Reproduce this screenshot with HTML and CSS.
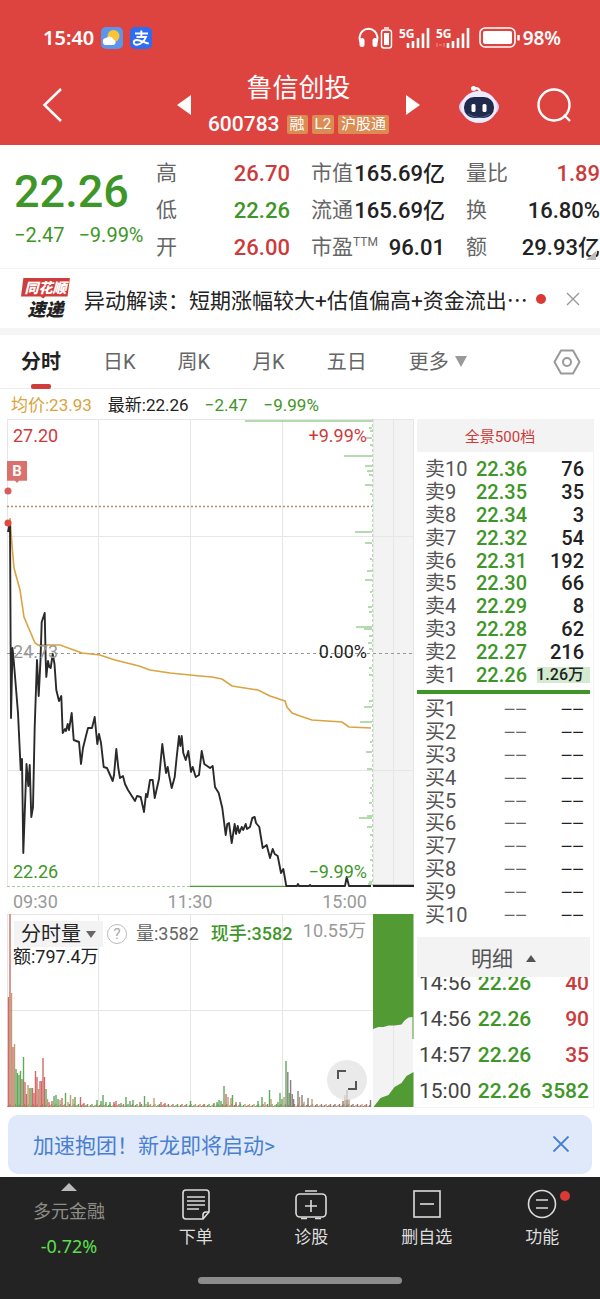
FILE: index.html
```html
<!DOCTYPE html>
<html lang="zh-CN">
<head>
<meta charset="utf-8">
<meta name="viewport" content="width=device-width, initial-scale=1">
<title>鲁信创投 600783</title>
<link rel="stylesheet" href="styles.css">
</head>
<body>
<header class="top">
  <div class="status">
    <span class="clock">15:40</span>
    <svg class="app-icon" viewBox="0 0 22 22"><rect width="22" height="22" rx="5" fill="#5b96ea"/><circle cx="12.500" cy="9" r="6" fill="#fbc335"/><path d="M5.500 18a3.500 3.500 0 0 1-.3-7 4 4 0 0 1 7 1.200 3 3 0 0 1 .3 5.800z" fill="#fff"/></svg>
    <svg class="app-icon" viewBox="0 0 22 22"><rect width="22" height="22" rx="5" fill="#2f6df0"/><path d="M5 6.500h13M11.300 3.500v6.500M6.500 10h9.500c-1.500 4-5.500 7.700-9 7.700-4.500 0-4-4.700-.2-4.700 3.500 0 7 2.300 12 3.700" fill="none" stroke="#fff" stroke-width="1.900"/></svg>
    <span class="push"></span>
    <svg class="radio-icons" viewBox="0 0 114 24" fill="none" stroke="#fff">
      <path d="M3.500 17.500A9 9 0 1 1 17.500 17.500" stroke-width="2"/>
      <path d="M4 14.500v4M17 14.500v4" stroke-width="5" stroke-linecap="round"/>
      <rect x="23.500" y="4" width="10" height="18" rx="2.500" stroke-width="1.400"/><path d="M26 2h5" stroke-width="1.500"/><rect x="26" y="7" width="5" height="12" fill="#fff" stroke="none"/>
      <path d="M50 22v-5M55 22v-7M60 22v-10M65 22V7.500M70 22V2" stroke-width="2.600"/>
      <path d="M90 22v-5M95 22v-7M100 22v-10M105 22V7.500M110 22V2" stroke-width="2.600"/>
      <path d="M79 17v4M81 19h3M86 17v4" stroke="#ef8f8b" stroke-width="1"/>
      <text x="41" y="12" class="net">5G</text><text x="78" y="12" class="net">5G</text>
    </svg>
    <svg class="battery" viewBox="0 0 42 22"><rect x="1" y="1" width="35" height="19" rx="5" fill="none" stroke="#fff" stroke-width="1.600"/><rect x="4" y="4" width="29" height="13" rx="2" fill="#fff"/><path d="M39.500 8v5.500" stroke="#fff" stroke-width="2.500"/></svg>
    <span class="percent">98%</span>
  </div>
  <div class="bar">
    <button class="icon-btn" aria-label="返回"><svg width="24" height="38" viewBox="0 0 24 38"><path d="M20 3 3.500 19 20 35" fill="none" stroke="#fff" stroke-width="2.500"/></svg></button>
    <div class="switcher">
      <button class="icon-btn" aria-label="上一只"><svg width="14" height="20" viewBox="0 0 14 20"><path d="M14 0v20L0 10z" fill="#fff"/></svg></button>
      <div class="stock">
        <h1>鲁信创投</h1>
        <div class="code-row"><span class="code">600783</span><span class="tag">融</span><span class="tag">L2</span><span class="tag">沪股通</span></div>
      </div>
      <button class="icon-btn" aria-label="下一只"><svg width="14" height="20" viewBox="0 0 14 20"><path d="M0 0v20l14-10z" fill="#fff"/></svg></button>
    </div>
    <div class="tools">
      <button class="icon-btn" aria-label="智能助手"><svg width="42" height="40" viewBox="0 0 42 40">
        <path d="M15 3.500q6-1.500 7.500 4" fill="none" stroke="#fff" stroke-width="2.200"/><circle cx="15.500" cy="3.500" r="2.500" fill="#fff"/>
        <ellipse cx="21" cy="22" rx="20" ry="12" fill="#d9cdf5"/><ellipse cx="21" cy="22" rx="18" ry="16" fill="#eeeaff"/>
        <rect x="6" y="12" width="30" height="21" rx="10" fill="#1f2a4d"/><path d="M10 29q11 7 22 0" stroke="#4c6196" fill="none"/>
        <rect x="13.500" y="19" width="4" height="8" rx="1.500" fill="#fff"/><rect x="24.500" y="19" width="4" height="8" rx="1.500" fill="#fff"/></svg></button>
      <button class="icon-btn" aria-label="搜索"><svg width="36" height="36" viewBox="0 0 36 36"><circle cx="18" cy="18" r="15.500" fill="none" stroke="#fff" stroke-width="2.400"/><path d="m28 28 6 6" stroke="#fff" stroke-width="2.400"/></svg></button>
    </div>
  </div>
</header>

<main>
  <section class="quote">
    <div class="last"><div class="price">22.26</div><div class="change"><span>−2.47</span><span>−9.99%</span></div></div>
    <dl class="facts">
      <div><dt>高</dt><dd class="up">26.70</dd></div><div><dt>市值</dt><dd>165.69亿</dd></div><div><dt>量比</dt><dd class="up">1.89</dd></div>
      <div><dt>低</dt><dd class="down">22.26</dd></div><div><dt>流通</dt><dd>165.69亿</dd></div><div><dt>换</dt><dd>16.80%</dd></div>
      <div><dt>开</dt><dd class="up">26.00</dd></div><div><dt>市盈<sup>TTM</sup></dt><dd>96.01</dd></div><div><dt>额</dt><dd>29.93亿</dd></div>
    </dl>
    <span class="corner"></span>
  </section>

  <section class="news">
    <div class="logo"><span class="logo-top">同花顺</span><span class="logo-bottom">速递</span></div>
    <a class="headline" href="#news">异动解读：短期涨幅较大+估值偏高+资金流出<span class="dots">…</span></a>
    <span class="dot"></span>
    <button class="icon-btn" aria-label="关闭"><svg width="16" height="16" viewBox="0 0 16 16"><path d="m2 2 12 12M14 2 2 14" stroke="#999" stroke-width="1.400"/></svg></button>
  </section>

  <nav class="tabs">
    <button class="tab active">分时</button><button class="tab">日K</button><button class="tab">周K</button><button class="tab">月K</button><button class="tab">五日</button><button class="tab">更多<i class="caret"></i></button>
    <button class="icon-btn" aria-label="设置"><svg width="28" height="28" viewBox="0 0 28 28" fill="none" stroke="#999" stroke-width="2"><path d="M8 2.500h12L26.500 14 20 25.500H8L1.500 14z" stroke-linejoin="round"/><circle cx="14" cy="14" r="4"/></svg></button>
  </nav>

  <div class="legend"><span class="avg">均价:23.93</span><span>最新:22.26</span><span class="down">−2.47</span><span class="down">−9.99%</span></div>

  <div class="board">
    <div class="charts">
      <div class="plot">
        <svg viewBox="0 419 414 468" preserveAspectRatio="none">
          <rect x="373" y="419" width="40" height="467" fill="#f3f3f3"/>
          <path class="grid" d="M7.500 419V886M98.500 419V886M190.500 419V886M282.500 419V886M373.500 419V886M393.500 419V886M413.500 419V886M7 419.500H414M7 536.500H414M7 770.500H414"/>
          <path d="M7 506.500H372" stroke="#b98a68" stroke-width="1.300" stroke-dasharray="2 2"/>
          <path d="M7 653.500H413" stroke="#999" stroke-dasharray="3 3"/>
          <path d="M7 886.500H190" stroke="#a9c8a3" stroke-dasharray="3 2"/><path d="M190 886.500H290" stroke="#4f9a35" stroke-width="1.400"/>
          <path d="M372.500 419V886" stroke="#b5dcae" stroke-dasharray="3 2"/>
          <path id="depth" stroke="#9bcf94" stroke-width="1.600"/>
          <polyline class="avg-line" points="10,518 12,545 14,568 20,590 24,617 35,643 38,645 60,645 82,653 100,655 115,660 139,666 150,670 170,673 200,676 212,677 222,679 232,686 258,690 270,696 282,700 285,701 287,707 292,713 300,716 312,720 342,722 349,727 371,728"/>
          <polyline class="price-line" points="8,532 10,522 11,718 12.500,648 14,664 18,713 20.700,770 22,759 23.300,853 26.500,764 28.300,786 29.700,765 31.300,817 33,807 34.700,727 37,660 38.700,696 40.500,660 41.700,622 44.700,613 45.700,660 46.300,677 48,661 49.300,667 50.700,668 52.700,654 54.500,664 56.300,690 59,701 61.300,696 62.700,733 65,729 66,731 67.700,724 69,730 71.700,713 73.700,740 79,742 81,764 83,748 85.700,737 88,728 92,728 94.700,717 97.300,744 99,734 101,743 103.700,767 107,768 112.700,781 114,775 116.300,749 118.300,768 120,778 123,776 125,784 128,790 135,801 137,796 140.700,797 144,812 146,794 147.300,797 150,780 152.700,780 154.700,798 159,779 162.300,744 166,773 167.700,767 169,775 171.700,788 174.700,777 176.700,757 179,736 180.300,746 181.700,736 183.300,753 185.700,760 188.300,751 191,772 192.700,767 195.700,777 199,775 201.700,751 204.300,764 210,768 212.700,766 215,787 218.700,793 222.300,808 225.700,835 227.300,824 229,823 231.700,843 234.700,824 236,834 237.700,826 239.300,833 241.700,827 243.300,830 245.700,824 247,829 250,827 252.300,818 254.700,817 256,823 259.300,827 262.700,848 266.700,845 270,858 272.700,849 274.700,854 277.700,856 281,873 283.300,869 286.300,886 297,886 298,884 299,886 309,886 310,885 311,886 345,886 346.700,877 349,886 371,886"/>
          <path d="M373 886H414" stroke="#222" stroke-width="2.500"/>
          <circle cx="8" cy="491" r="3.500" fill="#d65d5b"/><circle cx="8" cy="523" r="3.500" fill="#e04a43"/>
        </svg>
        <span class="badge">B</span>
        <div class="labels"><span class="up">27.20</span><span class="up">+9.99%</span></div>
        <div class="labels mid"><span class="muted">24.73</span><span>0.00%</span></div>
        <div class="labels low"><span class="down">22.26</span><span class="down">−9.99%</span></div>
      </div>
      <div class="axis"><span>09:30</span><span>11:30</span><span>15:00</span></div>
      <div class="volume">
        <svg viewBox="0 914 414 193" preserveAspectRatio="none">
          <rect x="373" y="914" width="40" height="193" fill="#f3f3f3"/>
          <path class="grid" d="M7.500 914V1107M98.500 914V1107M190.500 914V1107M282.500 914V1107M393.500 914V1107M7 914.500H373M7 1010.500H373"/>
          <path d="M373 914h40.500v125h-1v-22l-4 .5-4 3-3 4-7 1-6 0-5 1.500-5 0-5.500 2z" fill="#519a34"/>
          <path d="M373.500 1107l7-9 8-3 6-8 7-4 5-7 7-4V1107z" fill="#519a34"/>
          <g id="bars"></g>
        </svg>
        <div class="vol-head">
          <button class="picker">分时量<i class="caret"></i></button>
          <button class="help" aria-label="说明">?</button>
          <span class="vol">量:3582</span><span class="down now">现手:3582</span>
        </div>
        <div class="amount">额:797.4万</div>
        <span class="max">10.55万</span>
        <button class="expand" aria-label="全屏"><svg width="22" height="22" viewBox="0 0 22 22"><path d="M2 10V2h8M20 12v8h-8" fill="none" stroke="#555" stroke-width="2"/></svg></button>
      </div>
    </div>

    <aside class="book">
      <button class="levels">全景500档</button>
      <table class="orders">
        <tr><th>卖10</th><td class="down">22.36</td><td>76</td></tr>
        <tr><th>卖9</th><td class="down">22.35</td><td>35</td></tr>
        <tr><th>卖8</th><td class="down">22.34</td><td>3</td></tr>
        <tr><th>卖7</th><td class="down">22.32</td><td>54</td></tr>
        <tr><th>卖6</th><td class="down">22.31</td><td>192</td></tr>
        <tr><th>卖5</th><td class="down">22.30</td><td>66</td></tr>
        <tr><th>卖4</th><td class="down">22.29</td><td>8</td></tr>
        <tr><th>卖3</th><td class="down">22.28</td><td>62</td></tr>
        <tr><th>卖2</th><td class="down">22.27</td><td>216</td></tr>
        <tr><th>卖1</th><td class="down">22.26</td><td class="big">1.26万</td></tr>
      </table>
      <div class="ratio"></div>
      <table class="orders empty">
        <tr><th>买1</th><td>−−</td><td>−−</td></tr>
        <tr><th>买2</th><td>−−</td><td>−−</td></tr>
        <tr><th>买3</th><td>−−</td><td>−−</td></tr>
        <tr><th>买4</th><td>−−</td><td>−−</td></tr>
        <tr><th>买5</th><td>−−</td><td>−−</td></tr>
        <tr><th>买6</th><td>−−</td><td>−−</td></tr>
        <tr><th>买7</th><td>−−</td><td>−−</td></tr>
        <tr><th>买8</th><td>−−</td><td>−−</td></tr>
        <tr><th>买9</th><td>−−</td><td>−−</td></tr>
        <tr><th>买10</th><td>−−</td><td>−−</td></tr>
      </table>
      <button class="detail">明细<i class="caret upward"></i></button>
      <div class="trades">
        <table>
          <tr><td>14:56</td><td class="down">22.26</td><td class="up">40</td></tr>
          <tr><td>14:56</td><td class="down">22.26</td><td class="up">90</td></tr>
          <tr><td>14:57</td><td class="down">22.26</td><td class="up">35</td></tr>
          <tr><td>15:00</td><td class="down">22.26</td><td class="down">3582</td></tr>
        </table>
      </div>
    </aside>
  </div>

  <div class="promo">
    <a href="#promo">加速抱团！新龙即将启动&gt;</a>
    <button class="icon-btn" aria-label="关闭"><svg width="18" height="18" viewBox="0 0 18 18"><path d="m1.500 1.500 15 15M16.500 1.500l-15 15" stroke="#4a80cf" stroke-width="1.800"/></svg></button>
  </div>
</main>

<footer class="dock">
  <nav class="dock-items">
    <button class="sector"><svg width="16" height="8" viewBox="0 0 16 8"><path d="M8 0l8 8H0z" fill="#bbb"/></svg><span>多元金融</span><b>-0.72%</b></button>
    <button><svg width="30" height="32" viewBox="0 0 30 32"><path d="M5 2h20q3 0 3 3v19l-6 7H5q-3 0-3-3V5q0-3 3-3z"/><path d="M6 9h18M6 13h18M6 17h18M6 21h12M22 31v-4q0-3 3-3h3"/></svg><span>下单</span></button>
    <button><svg width="34" height="32" viewBox="0 0 34 32"><rect x="2" y="6" width="30" height="23" rx="4"/><path d="M11 3h12M17 12v12M11 18h12M7 30.500h6M21 30.500h6"/></svg><span>诊股</span></button>
    <button><svg width="30" height="32" viewBox="0 0 30 32"><rect x="2" y="3" width="26" height="26"/><path d="M8 16h14"/></svg><span>删自选</span></button>
    <button class="more"><svg width="30" height="32" viewBox="0 0 30 32"><circle cx="15" cy="16" r="13.500"/><path d="M9 12h12M9 20h12"/></svg><span>功能</span><i class="dot"></i></button>
  </nav>
  <div class="home"></div>
</footer>
<script src="chart.js"></script>
</body>
</html>
```

FILE: chart.js
```js
// Resting depth by price: [y, length] measured leftwards from the plot edge.
const depth = [[421,127],[428,3],[431,2],[438,6],[445,2],[456,28],[466,7],[471,5],[475,3],[485,7],[494,2],[532,17],[543,7],[559,2],[571,5],[580,7],[592,2],[607,4],[612,3],[627,16],[629,8],[636,3],[643,4],[649,3],[668,3],[675,3],[701,3],[707,8],[722,12],[742,2],[752,6],[769,5],[788,2],[793,2],[803,3],[816,5],[818,13],[827,5],[835,2],[847,2],[860,2],[882,3],[884,4]];
document.getElementById('depth').setAttribute('d', depth.map(([y, n]) => `M${372 - n} ${y}H372`).join(''));

// Traded volume: [x, height, side], r = up, g = down, o = flat, k = limit-locked.
const tones = { r: '#d16a66', g: '#62a85c', o: '#b9a071', k: '#85807f' };
const peaks = [[8.5,110,'r'],[10,193,'r'],[11.5,114,'o'],[13,60,'r'],[14.5,63,'o'],[16,38,'g'],[17.5,34,'g'],[19,32,'g'],[20.5,36,'g'],[22,28,'r'],[23.5,50,'g'],[25,25,'r'],[26.5,13,'r'],[28,22,'o'],[29.5,19,'o'],[31,19,'g'],[32.5,19,'r'],[34,14,'r'],[35.5,36,'r'],[37,30,'r'],[38.5,18,'o'],[40,26,'r'],[41.5,26,'r'],[43,49,'r'],[44.5,30,'r'],[46,18,'g'],[47.5,8,'o'],[49,5,'r'],[52,6,'r'],[54,11,'g'],[56,12,'g'],[58,8,'g'],[60,7,'o'],[62,9,'r'],[65.5,14,'g'],[68,5,'o'],[70.5,12,'o'],[73,8,'o'],[75,10,'g'],[80.5,10,'r'],[84,4,'r'],[97,7,'g'],[101,6,'g'],[103,12,'g'],[106,5,'g'],[110,5,'g'],[114,5,'r'],[116,6,'r'],[121,4,'g'],[126,10,'g'],[130,6,'g'],[133,7,'g'],[140,5,'r'],[144.5,11,'g'],[148,5,'g'],[154,9,'o'],[161,5,'r'],[165,4,'r'],[190.5,6,'g'],[204,3,'r'],[214,4,'g'],[217,5,'g'],[219,7,'g'],[221,6,'g'],[224,21,'g'],[226,13,'r'],[228,10,'o'],[231,9,'o'],[232.5,12,'g'],[236,5,'r'],[240,5,'g'],[258,6,'g'],[262,10,'g'],[265,5,'o'],[269.5,17,'g'],[271,8,'o'],[278,5,'g'],[280,14,'g'],[282,8,'g'],[284,10,'o'],[286,46,'g'],[287.8,35,'k'],[289.2,14,'g'],[290.6,27,'k'],[292.2,13,'k'],[293.6,8,'k'],[298,16,'k'],[299.5,10,'o'],[302,12,'k'],[304,5,'o'],[308,9,'k'],[312,8,'o'],[343,6,'k'],[345,12,'o'],[347,17,'k'],[349,8,'o'],[370.5,7,'k']];
const bars = [];
const order = 'rgorggokrog';
for (let i = 0; i < 242; i++) {
  const x = 8 + i * 1.5;
  bars.push([x, 1 + (i * 7) % 3, x > 286 ? 'okkr'[i % 4] : order[(i * 5) % order.length]]);
}
document.getElementById('bars').innerHTML = bars.concat(peaks)
  .map(([x, h, s]) => `<path d="M${x} 1107v-${h}" stroke="${tones[s]}" stroke-width="1.4"/>`).join('');
```

FILE: styles.css
```css
* { box-sizing: border-box; }
body {
  margin: 0;
  background: #fff;
  color: #222;
  font-family: Roboto, "Noto Sans CJK SC", sans-serif;
  font-size: 21px;
}
button { border: 0; padding: 0; background: none; color: inherit; font: inherit; }
a { color: inherit; text-decoration: none; }
svg { display: block; }
table { border-collapse: collapse; }
.icon-btn { display: flex; flex: none; }
.push { flex: 1; }
.up { color: #cc3b3b; }
.down { color: #3f9628; }
.muted { color: #999; }
.dot { width: 10px; height: 10px; border-radius: 50%; background: #d93a36; }
.caret { display: inline-block; border: 6px solid transparent; border-top: 11px solid #999; border-bottom: 0; }

/* header */
.top { background: #dd443f; color: #fff; height: 145px; padding-top: 22px; }
.status { display: flex; align-items: center; height: 32px; padding: 0 39px 0 43px; font: 600 20px/32px "Noto Sans", sans-serif; }
.clock { margin-right: 7px; }
.app-icon { width: 22px; height: 22px; margin-right: 7px; }
.radio-icons { width: 114px; height: 24px; margin-right: 7px; }
.net { font: 700 12px "Noto Sans", sans-serif; fill: #fff; stroke: none; }
.battery { width: 42px; height: 22px; margin-right: 2px; }
.percent { font-size: 19px; }
.bar { display: flex; align-items: center; justify-content: space-between; height: 84px; padding: 0 28px 0 41px; margin-top: 9px; }
.switcher { display: flex; align-items: center; margin-left: 74px; gap: 17px; }
.tools { display: flex; align-items: center; gap: 36px; }
.stock { display: flex; flex-direction: column; align-items: center; }
h1 { margin: 0; font-size: 26px; font-weight: 400; line-height: 38px; }
.code-row { display: flex; align-items: center; gap: 4px; line-height: 34px; }
.code { font-size: 21px; margin-right: 3px; font-weight: 500; }
.tag { background: #dc8b52; border-radius: 2px; font-size: 15px; line-height: 19px; padding: 0 3px; }

/* quote */
.quote { position: relative; display: grid; grid-template-columns: 142px 1fr; height: 124px; padding-left: 14px; border-bottom: 1px solid #f3f3f3; }
.price { color: #3f9628; font-size: 45px; font-weight: 500; line-height: 48px; margin-top: 23px; }
.change { display: flex; gap: 14px; color: #3f9628; font-size: 20px; line-height: 38px; white-space: nowrap; }
.facts { display: grid; grid-template-columns: repeat(3, 1fr); column-gap: 21px; margin: 10px 0 0; align-content: start; }
.facts div { display: flex; justify-content: space-between; line-height: 37px; white-space: nowrap; }
.facts dt { color: #666; }
.facts dd { margin: 0; font-size: 22px; font-weight: 500; }
.facts sup { font-size: 12px; line-height: 0; vertical-align: 8px; }
.corner { position: absolute; right: 4px; bottom: 8px; border-left: 10px solid transparent; border-bottom: 9px solid #bbb; }

/* news */
.news { display: flex; align-items: center; height: 66px; padding: 0 19px 0 21px; border-bottom: 7px solid #f5f5f5; }
.logo { display: flex; flex-direction: column; align-items: center; width: 49px; margin-right: 14px; font-style: italic; font-weight: 900; }
.logo-top { width: 49px; background: #cf3d3b; color: #fff; font-size: 14px; line-height: 21px; text-align: center; clip-path: polygon(5% 0, 100% 0, 95% 90%, 50% 90%, 45% 100%, 40% 90%, 0 90%); }
.logo-bottom { font-size: 18px; line-height: 21px; }
.headline { flex: 1; white-space: nowrap; }
.dots { font-family: "Noto Sans CJK SC", sans-serif; }
.news .dot { margin: 0 19px 0 4px; }

/* tabs */
.tabs { display: flex; align-items: center; gap: 42px; height: 54px; padding: 0 19px 0 21px; border-bottom: 1px solid #eee; font-size: 20px; color: #666; }
.tab { position: relative; line-height: 54px; white-space: nowrap; }
.tab.active { color: #222; font-weight: 700; }
.tab.active::after { content: ""; position: absolute; left: 50%; bottom: 0; width: 20px; height: 5px; margin-left: -10px; border-radius: 2px; background: #cf3d3b; }
.tab .caret { margin-left: 6px; vertical-align: 2px; }
.tabs .icon-btn { margin-left: auto; }
.legend { display: flex; gap: 16px; height: 30px; padding-left: 11px; font-size: 17px; line-height: 32px; }
.avg { color: #d9a441; }

/* charts */
.board { display: grid; grid-template-columns: minmax(0, 1fr) 180px; padding-right: 6px; }
.plot, .volume { position: relative; }
.plot { height: 468px; }
.plot > svg, .volume > svg { width: 100%; height: 100%; }
.grid { stroke: #e6e6e6; fill: none; }
.avg-line { fill: none; stroke: #d9a441; stroke-width: 1.6; }
.price-line { fill: none; stroke: #2a2a2a; stroke-width: 1.9; stroke-linejoin: round; }
.labels { position: absolute; left: 13px; right: 47px; top: 6px; display: flex; justify-content: space-between; font-size: 18px; line-height: 22px; }
.labels.mid { top: 222px; }
.labels.low { top: auto; bottom: 4px; }
.badge { position: absolute; left: 7px; top: 42px; width: 20px; padding-bottom: 2px; background: #db716d; color: #fff; font-size: 15px; font-weight: 700; line-height: 20px; text-align: center; clip-path: polygon(0 0, 100% 0, 100% 90%, 60% 90%, 50% 100%, 40% 90%, 0 90%); }
.axis { display: flex; justify-content: space-between; height: 27px; padding: 0 47px 0 13px; color: #999; font-size: 18px; line-height: 29px; }
.volume { height: 193px; font-size: 18px; }
.vol-head { position: absolute; left: 14px; top: 7px; display: flex; align-items: center; line-height: 26px; white-space: nowrap; }
.picker { display: flex; align-items: center; gap: 5px; padding: 0 7px; background: #f3f3f3; font-size: 20px; }
.picker .caret { border-width: 7px 5px 0; border-top-color: #666; }
.help { width: 20px; height: 20px; margin: 0 9px 0 4px; border: 1px solid #bbb; border-radius: 50%; color: #aaa; font-size: 15px; line-height: 18px; }
.vol { color: #666; }
.now { margin-left: 12px; font-weight: 500; }
.amount { position: absolute; left: 13px; top: 30px; line-height: 26px; }
.max { position: absolute; right: 48px; top: 5px; color: #999; line-height: 24px; }
.expand { position: absolute; right: 47px; bottom: 7px; display: grid; place-items: center; width: 40px; height: 40px; border-radius: 50%; background: rgba(225, 225, 225, .7); }

/* order book */
.book { border-right: 1px solid #f3f3f3; border-bottom: 1px solid #f3f3f3; padding-left: 3px; }
.levels { display: block; width: 100%; height: 33px; background: #f3f3f3; color: #cc3b3b; font-size: 15px; padding-right: 10px; }
.orders { width: 100%; height: 228px; margin-top: 6px; table-layout: fixed; font-size: 20px; line-height: 22px; }
.orders th, .orders td { padding: 0; text-align: right; white-space: nowrap; font-weight: 500; }
.orders th { width: 55px; padding-left: 8px; text-align: left; font-weight: 400; color: #555; }
.orders td:nth-child(2) { width: 55px; }
.orders td:last-child { padding-right: 9px; }
.orders .big { font-size: 16px; background: linear-gradient(#d3ebcf, #d3ebcf) right 3px center / 53px 16px no-repeat; }
.ratio { height: 4px; margin: 4px 3px 0 0; background: #3f9628; }
.orders.empty { margin-top: 4px; }
.orders.empty td { font-family: "Liberation Sans", sans-serif; font-weight: 400; }
.orders.empty td:nth-child(2) { color: #666; }
.detail { display: block; width: calc(100% - 3px); height: 40px; margin-top: 11px; background: #f3f3f3; color: #555; }
.detail .upward { border: 5px solid transparent; border-bottom: 7px solid #555; border-top: 0; margin-left: 13px; vertical-align: 4px; }
.trades { display: flex; align-items: flex-end; height: 130px; overflow: hidden; }
.trades table { width: 100%; font-weight: 500; }
.trades td { height: 36px; padding: 3px 4px 0 0; text-align: right; }
.trades td:first-child { width: 56px; color: #444; padding-left: 2px; text-align: left; font-weight: 400; }
.trades td:nth-child(2) { width: 56px; padding-right: 0; }

/* promo and dock */
.promo { display: flex; align-items: center; justify-content: space-between; height: 59px; margin: 7px 8px 3px; padding: 0 22px 2px 25px; border-radius: 10px; background: #dfe9fa; color: #4a80cf; }
.dock { background: #232323; color: #ddd; height: 123px; padding-top: 6px; }
.dock-items { display: grid; grid-template-columns: 138px repeat(4, 1fr); height: 94px; }
.dock button { position: relative; display: flex; flex-direction: column; align-items: center; padding-top: 5px; font-size: 17px; line-height: 34px; }
.dock svg { fill: none; stroke: #ddd; stroke-width: 1.6; }
.dock .sector { padding-top: 0; color: #8d8d85; line-height: 35px; font-size: 18px; }
.dock .sector svg { stroke: none; margin-bottom: 3px; }
.dock .sector b { color: #5be04f; font: 400 18px/34px "Noto Sans", sans-serif; }
.more .dot { position: absolute; left: 50%; top: 8px; margin-left: 18px; }
.home { width: 34%; height: 7px; margin: 0 auto; border-radius: 4px; background: #8c8c8c; }
```
